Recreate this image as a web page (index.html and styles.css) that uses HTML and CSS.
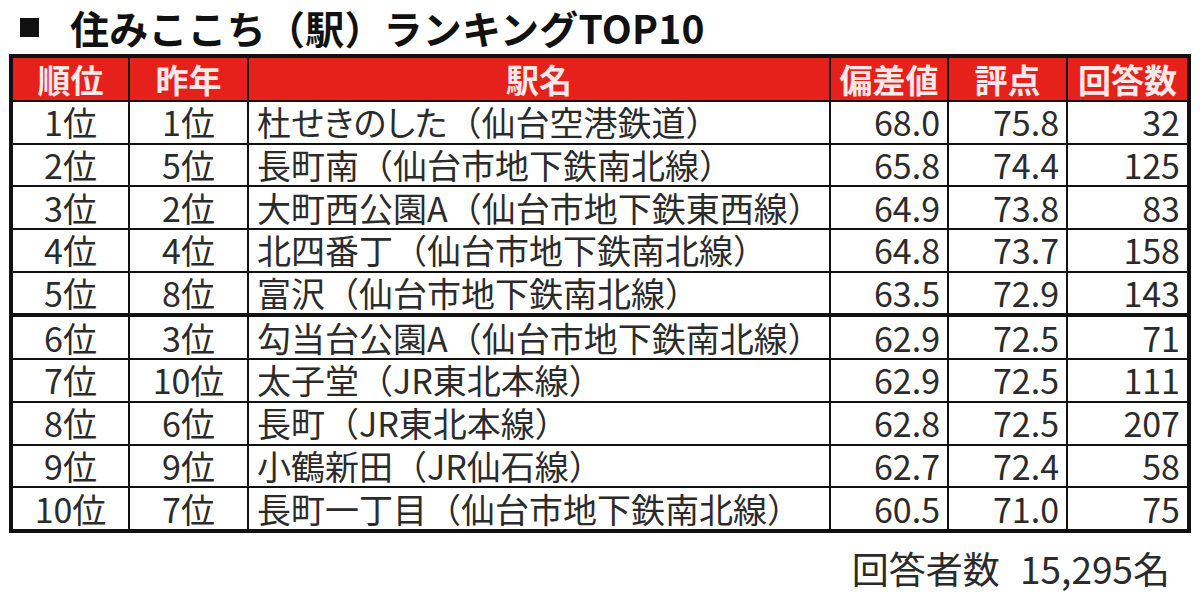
FILE: index.html
```html
<!DOCTYPE html>
<html lang="ja">
<head>
<meta charset="utf-8">
<title>住みここち（駅）ランキングTOP10</title>
<link rel="stylesheet" href="styles.css">
</head>
<body>
<div class="page">
  <h1 class="title"><span class="sq"></span>住みここち（駅）ランキングTOP10</h1>
  <table class="rank">
    <colgroup>
      <col class="c-rank"><col class="c-prev"><col class="c-name"><col class="c-dev"><col class="c-score"><col class="c-count">
    </colgroup>
    <thead>
      <tr><th>順位</th><th>昨年</th><th>駅名</th><th>偏差値</th><th>評点</th><th>回答数</th></tr>
    </thead>
    <tbody>
      <tr><td class="ctr">1位</td><td class="ctr">1位</td><td class="name">杜<span class="kana">せきのした</span>（仙台空港鉄道）</td><td class="num">68.0</td><td class="num">75.8</td><td class="num">32</td></tr>
      <tr><td class="ctr">2位</td><td class="ctr">5位</td><td class="name">長町南（仙台市地下鉄南北線）</td><td class="num">65.8</td><td class="num">74.4</td><td class="num">125</td></tr>
      <tr><td class="ctr">3位</td><td class="ctr">2位</td><td class="name">大町西公園A（仙台市地下鉄東西線）</td><td class="num">64.9</td><td class="num">73.8</td><td class="num">83</td></tr>
      <tr><td class="ctr">4位</td><td class="ctr">4位</td><td class="name">北四番丁（仙台市地下鉄南北線）</td><td class="num">64.8</td><td class="num">73.7</td><td class="num">158</td></tr>
      <tr class="group-end"><td class="ctr">5位</td><td class="ctr">8位</td><td class="name">富沢（仙台市地下鉄南北線）</td><td class="num">63.5</td><td class="num">72.9</td><td class="num">143</td></tr>
      <tr><td class="ctr">6位</td><td class="ctr">3位</td><td class="name">勾当台公園A（仙台市地下鉄南北線）</td><td class="num">62.9</td><td class="num">72.5</td><td class="num">71</td></tr>
      <tr><td class="ctr">7位</td><td class="ctr">10位</td><td class="name">太子堂（JR東北本線）</td><td class="num">62.9</td><td class="num">72.5</td><td class="num">111</td></tr>
      <tr><td class="ctr">8位</td><td class="ctr">6位</td><td class="name">長町（JR東北本線）</td><td class="num">62.8</td><td class="num">72.5</td><td class="num">207</td></tr>
      <tr><td class="ctr">9位</td><td class="ctr">9位</td><td class="name">小鶴新田（JR仙石線）</td><td class="num">62.7</td><td class="num">72.4</td><td class="num">58</td></tr>
      <tr><td class="ctr">10位</td><td class="ctr">7位</td><td class="name">長町一丁目（仙台市地下鉄南北線）</td><td class="num">60.5</td><td class="num">71.0</td><td class="num">75</td></tr>
    </tbody>
  </table>
  <p class="note">回答者数 15,295名</p>
</div>
</body>
</html>
```
FILE: styles.css
```css
html, body {
  margin: 0;
  padding: 0;
  background: #ffffff;
}
body {
  font-family: "Noto Sans CJK JP", "Noto Sans", sans-serif;
  color: #2b2b2b;
}
.page {
  width: 1200px;
  height: 614px;
  overflow: hidden;
}
.title {
  margin: 0;
  height: 54px;
  padding-left: 20px;
  font-size: 39px;
  line-height: 56px;
  font-weight: 700;
  color: #111111;
  display: flex;
  align-items: center;
  letter-spacing: 0.2px;
}
.sq {
  display: inline-block;
  width: 19px;
  height: 19px;
  background: #111111;
  margin-right: 31px;
  flex: none;
}
.rank {
  margin-left: 9px;
  width: 1182px;
  border-collapse: collapse;
  table-layout: fixed;
  border: 4px solid #111111;
  font-size: 34px;
}
.c-rank { width: 118px; }
.c-prev { width: 119px; }
.c-name { width: 582px; }
.c-dev { width: 118px; }
.c-score { width: 119px; }
.c-count { width: 122px; }
.rank th {
  background: #e6201a;
  color: #fbe9e9;
  font-weight: 700;
  font-size: 33px;
  height: 42px;
  padding: 0;
  line-height: 42px;
  border-left: 2px solid #111111;
  border-bottom: 2px solid #111111;
  text-align: center;
  letter-spacing: 0;
}
.rank td {
  height: 40.7px;
  padding: 0;
  line-height: 40px;
  border: 2px solid #111111;
  white-space: nowrap;
}
.rank .group-end td {
  border-bottom: 4px solid #111111;
}
.ctr {
  text-align: center;
}
.name {
  text-align: left;
  padding-left: 8px !important;
}
.num {
  text-align: right;
  padding-right: 7px !important;
}
.kana {
  font-feature-settings: "palt";
}
.note {
  margin: 13px 30px 0 0;
  text-align: right;
  font-size: 37px;
  line-height: 44px;
  word-spacing: 12px;
  color: #2b2b2b;
}
```
